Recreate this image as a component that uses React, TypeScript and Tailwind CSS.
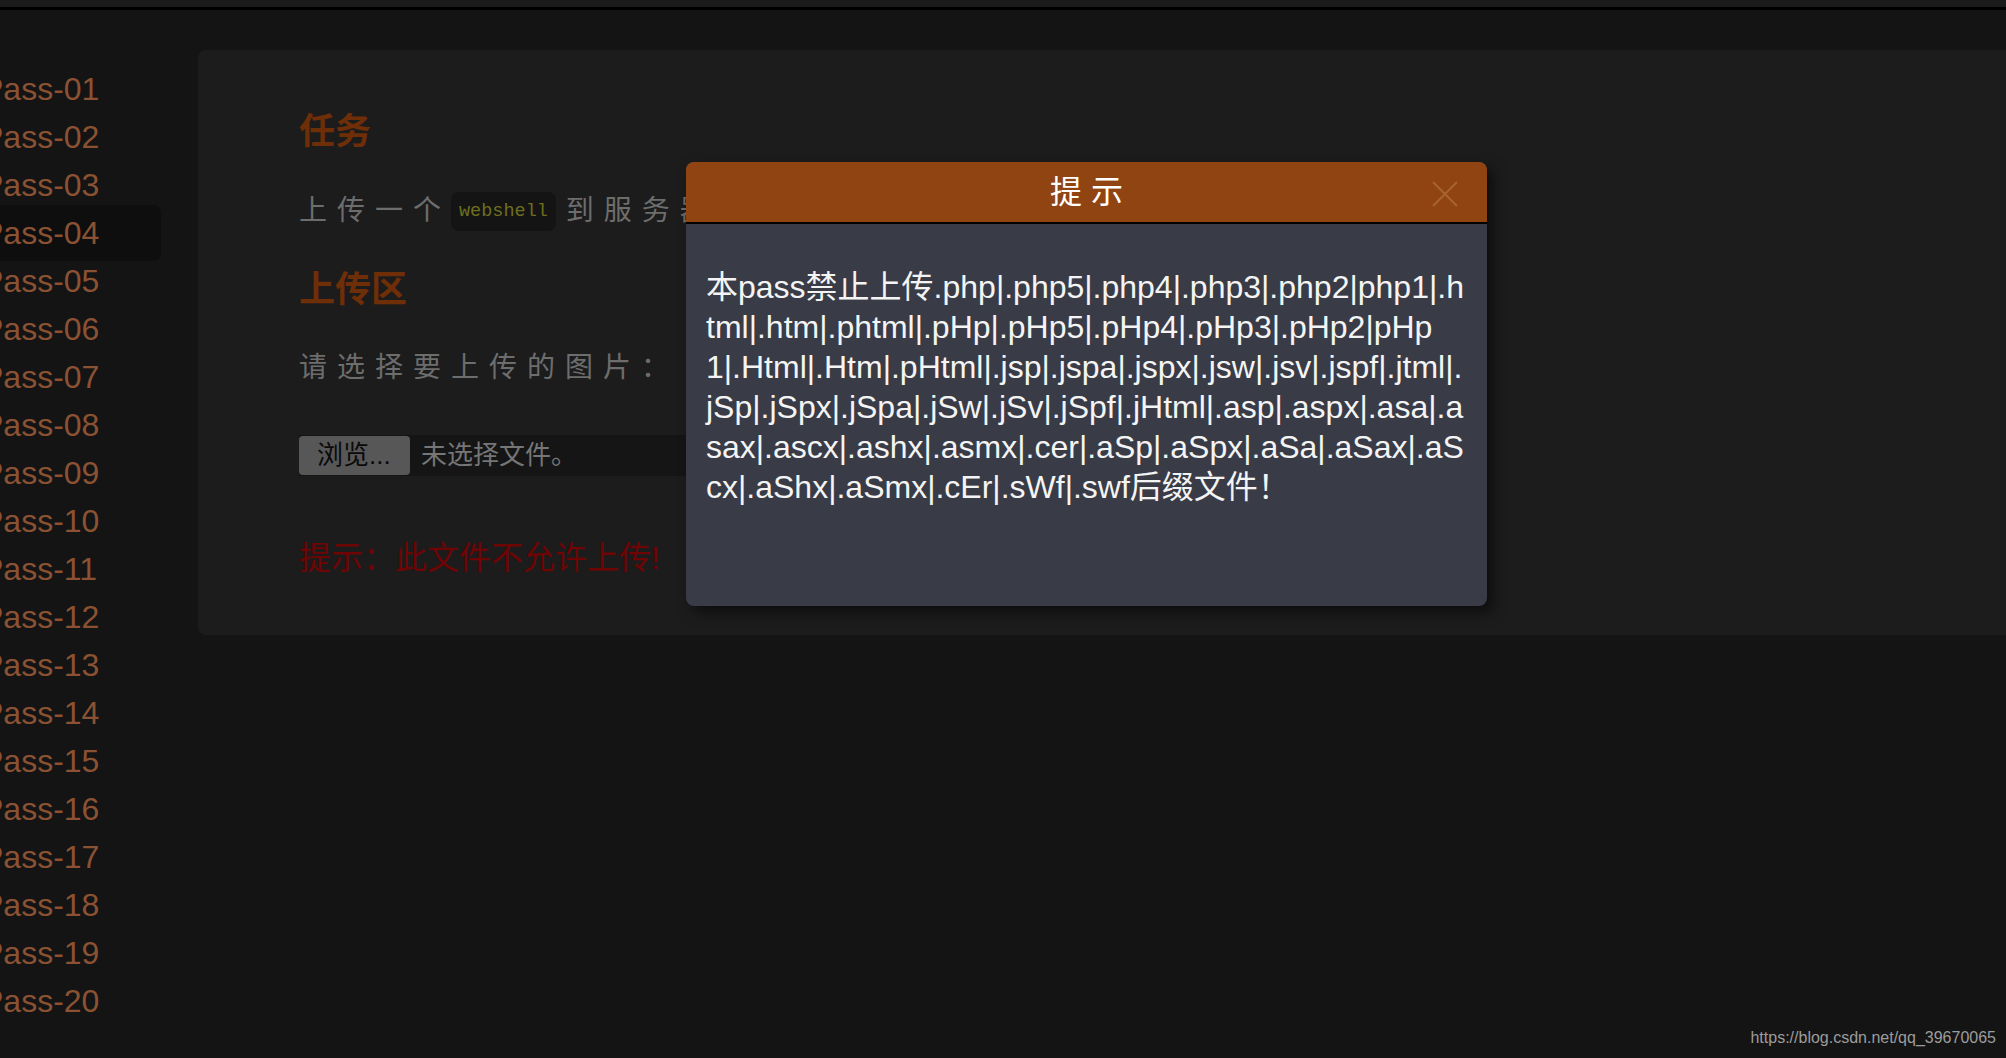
import { FC } from "react";
import clsx from "clsx";

const passList = Array.from(
  { length: 20 },
  (_, i) => `Pass-${String(i + 1).padStart(2, "0")}`,
);

// the alert wraps exactly like this in the reference
const tipLines = [
  "本pass禁止上传.php|.php5|.php4|.php3|.php2|php1|.h",
  "tml|.htm|.phtml|.pHp|.pHp5|.pHp4|.pHp3|.pHp2|pHp",
  "1|.Html|.Htm|.pHtml|.jsp|.jspa|.jspx|.jsw|.jsv|.jspf|.jtml|.",
  "jSp|.jSpx|.jSpa|.jSw|.jSv|.jSpf|.jHtml|.asp|.aspx|.asa|.a",
  "sax|.ascx|.ashx|.asmx|.cer|.aSp|.aSpx|.aSa|.aSax|.aS",
  "cx|.aShx|.aSmx|.cEr|.sWf|.swf后缀文件！",
];

const App: FC = () => {
  return (
    <div className="relative h-[1058px] w-full overflow-hidden bg-[#141414] font-['Liberation_Sans','Noto_Sans_CJK_SC',sans-serif]">
      <div className="h-[7px] bg-[#1b1b1b]" />
      <div className="h-[3px] bg-black" />

      <div className="flex">
        <ul className="w-[198px] shrink-0 pt-[55px]">
          {passList.map((name) => (
            <li
              key={name}
              className={clsx(
                "-ml-[30px] w-[191px] whitespace-nowrap rounded-lg pl-[12px] text-[32px] leading-[48px] text-[#8a5232]",
                name === "Pass-04" && "-my-1 bg-[#0e0e0e] py-1",
              )}
            >
              {name}
            </li>
          ))}
        </ul>

        <main className="mt-[40px] h-[585px] flex-1 rounded-l-lg bg-[#1c1c1c] pl-[101px] pt-[62px]">
          <h2 className="text-[36px] font-bold leading-[40px] text-[#6e2e08]">任务</h2>
          <p className="mt-[39px] flex h-[40px] items-center whitespace-nowrap text-[28px] tracking-[10px] text-[#6d6d6d]">
            <span>上传一个</span>
            <code className="mr-[10px] rounded-lg bg-[#141414] px-[8px] py-[8px] font-['Liberation_Mono',monospace] text-[18.5px] leading-[23px] tracking-normal text-[#6e6e1e]">
              webshell
            </code>
            <span>到服务器上。</span>
          </p>

          <h2 className="mt-[39px] text-[36px] font-bold leading-[40px] text-[#6e2e08]">上传区</h2>
          <p className="mt-[38px] whitespace-nowrap text-[28px] leading-[40px] tracking-[10px] text-[#6d6d6d]">
            请选择要上传的图片：
          </p>

          <div className="mt-[47px] flex h-[41px] w-[420px] items-center bg-[#151515]">
            <span className="flex h-[39px] w-[111px] items-center rounded-[4px] bg-[#575757] pl-[18px] text-[26px] text-[#0a0a0a]">
              浏览...
            </span>
            <span className="ml-[11px] text-[26px] text-[#767676]">未选择文件。</span>
          </div>

          <p className="mt-[62px] text-[32px] leading-[40px] text-[#6e0404]">
            提示：此文件不允许上传!
          </p>
        </main>
      </div>

      <div className="absolute left-[686px] top-[162px] flex h-[444px] w-[801px] flex-col overflow-hidden rounded-lg bg-[#393c47] shadow-[6px_6px_14px_rgba(0,0,0,0.55)]">
        <div className="relative flex h-[62px] shrink-0 items-center justify-center border-b-2 border-black bg-[#8f4411] text-[32px] text-white">
          提 示
          <svg
            className="absolute right-[29px] top-[19px]"
            width="26"
            height="26"
            viewBox="0 0 26 26"
            fill="none"
            stroke="#a8642f"
            strokeWidth="2"
          >
            <path d="M1 1L25 25M25 1L1 25" />
          </svg>
        </div>
        <div className="px-[20px] pt-[43px] text-[32px] leading-[40px] text-[#f4f4f4]">
          {tipLines.map((line) => (
            <div key={line} className="whitespace-nowrap">
              {line}
            </div>
          ))}
        </div>
      </div>

      <span className="absolute bottom-[11px] right-[10px] text-[16px] leading-[18px] text-[#9c9c9c]">
        https://blog.csdn.net/qq_39670065
      </span>
    </div>
  );
};

export default App;
